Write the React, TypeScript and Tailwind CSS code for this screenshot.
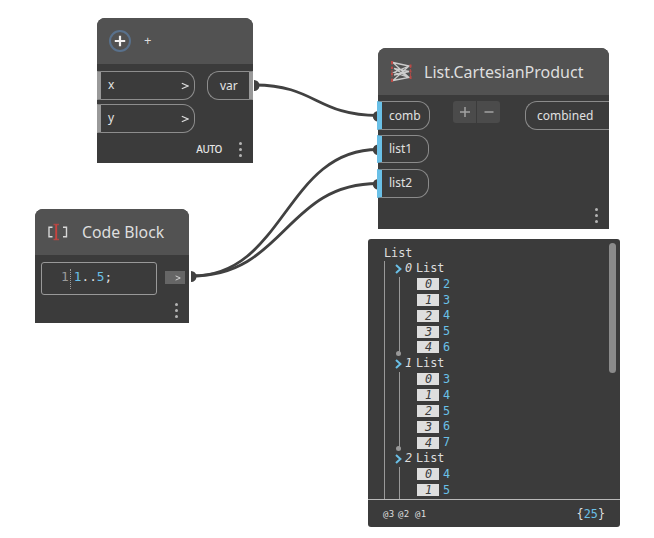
import React from "react";

const sans = "font-['Noto_Sans','Open_Sans',sans-serif]";
const mono = "font-['DejaVu_Sans_Mono','Liberation_Mono',monospace]";

function Menu({ className = "" }: { className?: string }) {
  return (
    <div className={`flex w-[3px] flex-col gap-[3px] ${className}`}>
      <i className="size-[3px] rounded-full bg-[#b4b4b4]" />
      <i className="size-[3px] rounded-full bg-[#b4b4b4]" />
      <i className="size-[3px] rounded-full bg-[#b4b4b4]" />
    </div>
  );
}

function Header({ icon, title, className }: { icon: React.ReactNode; title: string; className: string }) {
  return (
    <div className="flex items-center rounded-t-[8px] bg-[#525252] text-[#dedede]">
      {icon}
      <span className={`whitespace-nowrap ${className}`}>{title}</span>
    </div>
  );
}

function OperatorPort({ label }: { label: string }) {
  return (
    <div className="flex h-[29px] w-[98px] items-center rounded-r-[12px] border border-l-4 border-[#8d8d8d] border-l-[#999999] pr-[5px] pl-[7px] text-[12px] text-[#e4e4e4]">
      <span className="flex-1 pb-px leading-none">{label}</span>
      <Chevron />
    </div>
  );
}

function Chevron({ className = "" }: { className?: string }) {
  return (
    <svg width="8" height="8" viewBox="0 0 8 8" className={className} fill="none" stroke="#dcdcdc" strokeWidth="1.2">
      <path d="M.8 1.2 7 4 .8 6.8" />
    </svg>
  );
}

function ListPort({ label, className }: { label: string; className: string }) {
  return (
    <div className={`-ml-px flex items-center rounded-r-[12px] border border-l-[5px] border-[#8b8b8b] border-l-[#6ac0e7] pl-[7px] text-[12px] leading-none text-[#e0e0e0] ${className}`}>
      {label}
    </div>
  );
}

function AddNode() {
  return (
    <section className="absolute top-[18px] left-[97px] grid h-[145px] w-[156px] grid-rows-[46px_1fr] rounded-t-[8px] bg-[#3b3b3b]">
      <Header
        title="+"
        className="pl-[12px] text-[13px]"
        icon={
          <svg className="ml-[11px]" width="24" height="24" viewBox="0 0 24 24" fill="none">
            <circle cx="12" cy="12" r="10" stroke="#59718c" strokeWidth="2" />
            <path d="M12 6.8v10.4M6.8 12h10.4" stroke="#f2f2f2" strokeWidth="2.2" />
          </svg>
        }
      />
      <div className="flex flex-col pt-[7px]">
        <div className="flex justify-between">
          <div className="flex flex-col gap-[4px]">
            <OperatorPort label="x" />
            <OperatorPort label="y" />
          </div>
          <div className="flex h-[29px] w-[46px] items-center rounded-l-[12px] border border-r-4 border-[#8d8d8d] border-r-[#999999] pl-[12px] text-[12px] leading-none text-[#e4e4e4]">var</div>
        </div>
        <div className="mt-[8px] flex items-center justify-end gap-[17px] pr-[11px]">
          <span className="text-[10px] leading-[16px] font-medium tracking-[-0.35px] text-[#e6e6e6]">AUTO</span>
          <Menu />
        </div>
      </div>
    </section>
  );
}

function CodeBlock() {
  return (
    <section className="absolute top-[209px] left-[35px] grid h-[114px] w-[154px] grid-rows-[46px_1fr] rounded-t-[8px] bg-[#3b3b3b]">
      <Header
        title="Code Block"
        className="pt-[2px] pl-[13px] text-[15.8px]"
        icon={
          <svg className="ml-[13px]" width="21" height="18" viewBox="0 0 21 18" fill="none" strokeWidth="1.4">
            <path d="M4.500 4.200H1v9.600h3.500M15 4.200h3.500v9.600H15" stroke="#d8d8d8" />
            <path d="M5.500 1.500h5.500M5.500 16.500h5.500" stroke="#a94946" />
            <path d="M8.200 1.500v15" stroke="#c8423e" strokeWidth="1.900" />
          </svg>
        }
      />
      <div className="flex flex-col pt-[7px]">
        <div className="flex items-start pl-[6px]">
          <div className={`flex h-[33px] w-[116px] items-start rounded-[3px] border border-[#999999] pt-[5px] pl-[19px] text-[12.8px] leading-[17px] ${mono}`}>
            <span className="text-[#9b9b9b]">1</span>
            <span className="mt-px ml-[1px] h-[20px] border-l border-dotted border-[#9b9b9b]" />
            <span className="ml-[3px] whitespace-pre text-[#dedede]"><b className="font-normal text-[#6ac0e7]">1</b>..<b className="font-normal text-[#6ac0e7]">5</b>;</span>
          </div>
          <div className="mt-[9px] ml-[8px] flex h-[13px] w-[20px] items-center justify-end bg-[#666666] pr-[4px]">
            <Chevron className="size-[6px]" />
          </div>
        </div>
        <Menu className="mt-[8px] ml-[140px]" />
      </div>
    </section>
  );
}

function CartesianNode() {
  return (
    <section className="absolute top-[48px] left-[378px] grid h-[181px] w-[231px] grid-rows-[47px_1fr] rounded-t-[8px] bg-[#3b3b3b]">
      <Header
        title="List.CartesianProduct"
        className="pl-[11px] text-[16px]"
        icon={
          <svg className="ml-[12px]" width="23" height="23" viewBox="0 0 23 23" fill="none">
            <path d="M2 2v19M20.500 5v13" stroke="#a94b48" strokeWidth="1" strokeDasharray="3 1" />
            <path d="M3 2.500 19 6 4 12.500 19 17.500M3 20.500 19 17.500 4 8.500M3 20.500 19 6M3 2.500 19 17.500M4 8.500 19 11.500 4 15" stroke="#cccccc" strokeWidth="1.300" />
            <path d="M1 1h2v3H1zM1 7h2v2H1zM1 13h2v2H1zM1 19h2v3H1zM19.500 4.500h2v3h-2zM19.500 10.500h2v2h-2zM19.500 16h2v3h-2z" fill="#b94a46" />
          </svg>
        }
      />
      <div className="flex flex-col">
        <div className="flex items-start pt-[6px]">
          <div className="flex flex-col">
            <ListPort label="comb" className="h-[29px] w-[53px]" />
            <ListPort label="list1" className="mt-[5px] h-[28px] w-[52px]" />
            <ListPort label="list2" className="mt-[6px] h-[29px] w-[52px] pb-px" />
          </div>
          <div className="ml-[23px] flex h-[22px] w-[47px] divide-x divide-[#3b3b3b] overflow-hidden rounded-[3px] bg-[#4b4b4b]">
            <div className="flex flex-1 items-center justify-center">
              <svg width="10" height="10" viewBox="0 0 10 10" stroke="#a2a2a2" strokeWidth="1.5"><path d="M5 0v10M0 5h10" /></svg>
            </div>
            <div className="flex flex-1 items-center justify-center">
              <svg width="10" height="10" viewBox="0 0 10 10" stroke="#a2a2a2" strokeWidth="1.5"><path d="M.5 5h9" /></svg>
            </div>
          </div>
          <div className="ml-auto flex h-[29px] w-[84px] items-center rounded-l-[12px] border border-r-0 border-[#8b8b8b] pl-[11px] text-[12px] leading-none text-[#e0e0e0]">combined</div>
        </div>
        <Menu className="mt-[10px] ml-[217px]" />
      </div>
    </section>
  );
}

const groups = [[2, 3, 4, 5, 6], [3, 4, 5, 6, 7], [4, 5]];

function Preview() {
  return (
    <section className={`absolute top-[239px] left-[368px] grid h-[288px] w-[252px] grid-rows-[260px_1fr] rounded-[3px] bg-[#3b3b3b] text-[11.8px] text-[#dedede] ${mono}`}>
      <div className="flex justify-between overflow-hidden">
        <div className="flex flex-col pt-[6px] pl-[16px]">
          <div className="h-[15.85px] leading-[17px]">List</div>
          <div className="h-[240px] border-l border-[#999999] pl-[8px]">
            {groups.map((values, g) => (
              <div key={g}>
                <div className="flex h-[15.85px] items-center pl-[2px]">
                  <svg width="7" height="10" viewBox="0 0 7 10" fill="none" stroke="#6ac0e7" strokeWidth="2"><path d="m1 1 4.4 4L1 9" /></svg>
                  <i className="ml-[3px] w-[11px]">{g}</i>
                  <span>List</span>
                </div>
                <div className="relative ml-[6px] pl-[18px]">
                  <i className={`absolute top-0 left-0 w-px bg-[#999999] ${g < 2 ? "h-[77px]" : "h-[36px]"}`} />
                  {g < 2 && <i className="absolute top-[74px] left-[-3px] size-[5px] rounded-full bg-[#999999]" />}
                  {values.map((value, i) => (
                    <div key={i} className="flex h-[15.85px] items-center gap-[4px]">
                      <i className="mb-px h-[12px] w-[22px] bg-[#dedede] pl-[1px] text-center leading-[12px] text-[#3b3b3b]">{i}</i>
                      <span className="text-[#6ac0e7]">{value}</span>
                    </div>
                  ))}
                </div>
              </div>
            ))}
          </div>
        </div>
        <div className="mt-[4px] mr-[4px] h-[130px] w-[7px] rounded-full bg-[#8b8b8b]" />
      </div>
      <div className="flex items-center justify-between border-t border-[#b9b9b9] pr-[15px] pl-[15px]">
        <div className="flex pt-[2px] text-[9px] leading-none tracking-[0.4px]">
          <span className="w-[15px]">@3</span><span className="w-[17px]">@2</span><span>@1</span>
        </div>
        <span className="pt-[2px]">{"{"}<span className="text-[#6ac0e7]">25</span>{"}"}</span>
      </div>
    </section>
  );
}

function Wires() {
  return (
    <svg className="absolute inset-0" width="654" height="538" viewBox="0 0 654 538" fill="none">
      <g stroke="#414141" strokeWidth="2.8">
        <path d="M255 85C315 85 317 115.500 378 115.500" />
        <path d="M192 276C285 276 285 149.500 378 149.500" />
        <path d="M192 276C285 276 285 183.500 378 183.500" />
      </g>
      <g fill="#414141">
        <path d="M254 80a5.500 5.500 0 0 1 0 11zM191 271a5.500 5.500 0 0 1 0 11z" />
        <path d="M378 111a5.200 5.200 0 0 0 0 10.400zM378 144.500a5.200 5.200 0 0 0 0 10.400zM378 179a5.200 5.200 0 0 0 0 10.400z" />
      </g>
    </svg>
  );
}

export default function App() {
  return (
    <main className={`relative h-[538px] w-[654px] overflow-hidden bg-white ${sans}`}>
      <Wires />
      <AddNode />
      <CodeBlock />
      <CartesianNode />
      <Preview />
    </main>
  );
}
